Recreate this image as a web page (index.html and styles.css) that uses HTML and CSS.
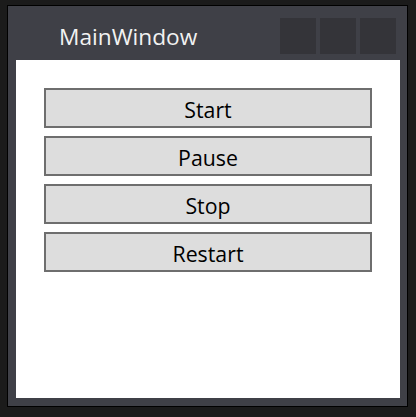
FILE: index.html
```html
<!DOCTYPE html>
<html>
<head>
<meta charset="utf-8">
<link rel="stylesheet" href="styles.css">
</head>
<body>
<div class="window">
  <div class="titlebar">
    <div class="title">MainWindow</div>
    <div class="controls">
      <div class="ctrl"></div>
      <div class="ctrl"></div>
      <div class="ctrl"></div>
    </div>
  </div>
  <div class="content">
    <button class="btn">Start</button>
    <button class="btn">Pause</button>
    <button class="btn">Stop</button>
    <button class="btn">Restart</button>
  </div>
</div>
</body>
</html>
```
FILE: styles.css
```css
html, body {
  margin: 0;
  padding: 0;
  background: #1b1b1b;
  width: 416px;
  height: 417px;
  overflow: hidden;
}
body {
  padding: 5px 0 0 7px;
  box-sizing: border-box;
}
.window {
  width: 401px;
  height: 402px;
  box-sizing: border-box;
  border: 1px solid #000;
  background: #3f4047;
  display: flex;
  flex-direction: column;
  padding: 0 7px 8px 8px;
}
.titlebar {
  height: 54px;
  flex: none;
  display: flex;
  align-items: flex-start;
  justify-content: space-between;
  padding: 12px 4px 0 43px;
  box-sizing: border-box;
}
.title {
  font-family: "Open Sans", sans-serif;
  font-size: 22.7px;
  line-height: 30px;
  color: #f2f2f2;
  margin-top: 4px;
}
.controls {
  display: flex;
  gap: 4px;
}
.ctrl {
  width: 36px;
  height: 36px;
  background: #343439;
}
.content {
  flex: 1;
  background: #fff;
  padding: 28px;
  display: flex;
  flex-direction: column;
  gap: 8px;
}
.btn {
  height: 40px;
  box-sizing: border-box;
  border: 2px solid #6e6e6e;
  background: #dddddd;
  margin: 0;
  padding: 3px 0 0 0;
  font-family: "Open Sans", sans-serif;
  font-size: 21.3px;
  line-height: 33px;
  color: #000;
  text-align: center;
  border-radius: 0;
}
```
